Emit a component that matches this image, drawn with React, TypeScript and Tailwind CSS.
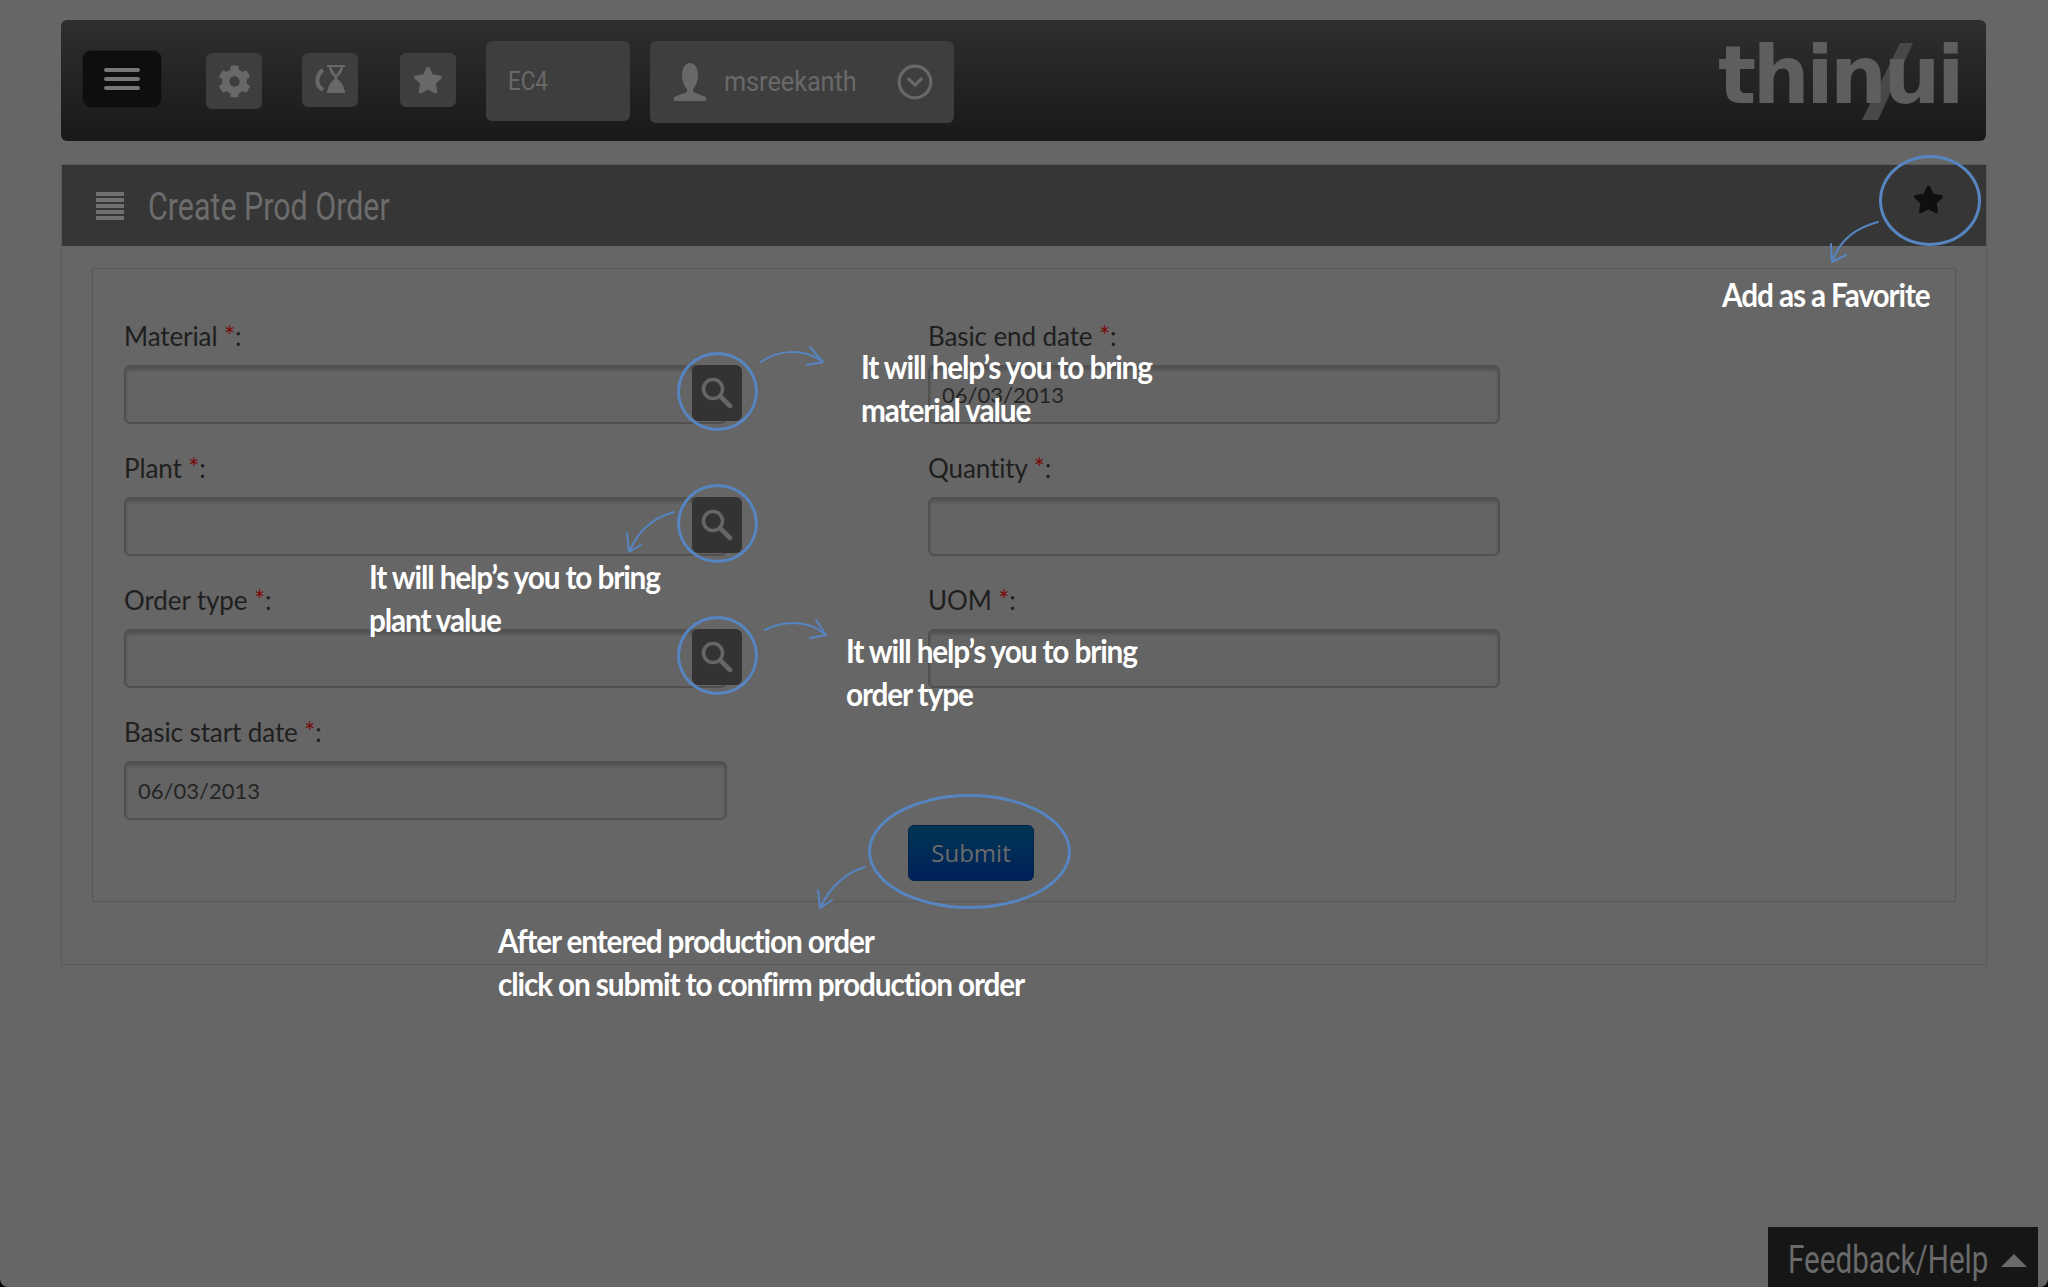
import { CircleChevronDown } from "lucide-react";
import { FaCog, FaStar } from "react-icons/fa";

const labelFont = "font-['Lato','Noto_Sans',sans-serif]";
const navFont = "font-['Roboto',sans-serif]";
const noteFont = "font-['Lato','DejaVu_Sans',sans-serif]";

const Field = ({ label, value, width }: { label: string; value?: string; width: string }) => (
	<div className={`flex flex-col ${width}`}>
		<label className={`flex items-end h-[73px] pb-[14px] text-[26px] leading-[30px] tracking-[-0.1px] text-[#1f1f1f] ${labelFont}`}>
			{label}&nbsp;<span className="text-[#7a0a0a]">*</span>:
		</label>
		<input
			readOnly
			defaultValue={value}
			className={`h-[59px] w-full rounded-md border-2 border-[#505050] bg-[#646464] px-3 text-[22px] text-[#242424] shadow-[inset_0_3px_3px_rgba(0,0,0,0.18)] outline-none ${labelFont}`}
		/>
	</div>
);

const SearchButton = ({ className }: { className: string }) => (
	<div className={`absolute left-[692px] flex h-[56px] w-[50px] items-center justify-center rounded-md bg-[#333333] ${className}`}>
		<svg width="34" height="32" viewBox="0 0 34 32" fill="none" stroke="#666666" strokeLinecap="round">
			<circle cx="13" cy="12" r="9.5" strokeWidth="3.6" />
			<path d="M21 20l9 9" strokeWidth="4.6" />
		</svg>
	</div>
);

const Ring = ({ className }: { className: string }) => (
	<div className={`absolute rounded-[50%] border-[3px] border-[#5685c1] ${className}`} />
);

const Note = ({ className, lines }: { className: string; lines: string[] }) => (
	<div className={`absolute origin-left scale-x-[0.93] whitespace-nowrap text-[32px] font-bold leading-[43px] tracking-[-1.2px] text-white ${noteFont} ${className}`}>
		{lines.map((line) => (
			<div key={line}>{line}</div>
		))}
	</div>
);

const Arrow = ({ line, head }: { line: string; head: string }) => (
	<>
		<path d={line} fill="none" stroke="#5685c1" strokeWidth={2} strokeLinecap="round" />
		<path d={head} fill="none" stroke="#5685c1" strokeWidth={2} strokeLinecap="round" strokeLinejoin="round" />
	</>
);

const App = () => {
	return (
		<div className="bg-black">
			<div className="relative h-[1287px] w-[2048px] overflow-hidden rounded-b-lg bg-[#666666] px-[61px] pt-5">
				{/* top bar */}
				<div className="relative flex h-[121px] w-[1925px] items-start rounded-md bg-gradient-to-b from-[#2f2f2f] to-[#191919] pl-[22px] pt-[21px]">
					<div className="mt-[10px] flex h-[56px] w-[78px] flex-col items-center justify-center gap-[5px] rounded-lg bg-[#0e0e0e] shadow-[0_0_0_1px_#1c1c1c]">
						<div className="h-[4px] w-[36px] rounded-full bg-[#777777]" />
						<div className="h-[4px] w-[36px] rounded-full bg-[#777777]" />
						<div className="h-[4px] w-[36px] rounded-full bg-[#777777]" />
					</div>
					<div className="ml-[45px] mt-[12px] flex h-[56px] w-[56px] items-center justify-center rounded-md bg-[#3e3e3e]">
						<FaCog size={33} className="text-[#686868]" />
					</div>
					<div className="ml-[40px] mt-[12px] flex h-[54px] w-[56px] items-center justify-center rounded-md bg-[#3e3e3e]">
						<svg width="32" height="32" viewBox="0 0 32 32" className="text-[#686868]">
							<path d="M13 1h18v2h-2c0 5-4 8-6 11 2 3 7 6 7 12h1v3H13v-3h1c0-6 5-9 7-12-2-3-6-6-6-11h-2z" fill="currentColor" />
							<path d="M17 3h10c-1 3-3 5-5 8-2-3-4-5-5-8z" fill="#3e3e3e" />
							<path d="M9 6C2 11 1 21 9 26" fill="none" stroke="currentColor" strokeWidth="4" />
						</svg>
					</div>
					<div className="ml-[42px] mt-[12px] flex h-[54px] w-[56px] items-center justify-center rounded-md bg-[#3e3e3e]">
						<FaStar size={30} className="text-[#686868]" />
					</div>
					<div className={`ml-[30px] flex h-[80px] w-[144px] items-center rounded-md bg-[#3e3e3e] pl-[22px] text-[26px] text-[#696969] ${navFont}`}>
						<span className="inline-block origin-left scale-x-[0.86]">EC4</span>
					</div>
					<div className={`ml-[20px] flex h-[82px] w-[304px] items-center rounded-md bg-[#3e3e3e] pl-[22px] text-[28px] text-[#696969] ${navFont}`}>
						<svg width="36" height="38" viewBox="0 0 36 38" className="shrink-0 text-[#686868]">
							<path d="M18 0c5 0 8 5 8 12s-3 12-5 14v3l13 5v4H2v-4l13-5v-3c-2-2-5-7-5-14S13 0 18 0z" fill="currentColor" />
						</svg>
						<span className="ml-[16px] inline-block w-[172px] origin-left scale-x-[0.9]">msreekanth</span>
						<CircleChevronDown size={38} strokeWidth={2} className="shrink-0 text-[#686868]" />
					</div>
					{/* logo */}
					<svg width="52" height="77" viewBox="0 0 52 77" className="absolute left-[1801px] top-[23px] text-[#484848]">
						<path d="M38 0h13L16 77H0z" fill="currentColor" />
					</svg>
					<div className="absolute left-[1657px] top-[1px] font-['DejaVu_Sans',sans-serif] text-[80px] font-bold leading-[110px] tracking-[-3.5px] text-[#5e5e5e]">
						thinui
					</div>
				</div>

				{/* page panel */}
				<div className="mt-[23px] h-[801px] w-[1926px] border border-[#5b5b5b]">
					<div className="flex h-[81px] items-center justify-between bg-[#363636] pl-[34px] pr-[42px]">
						<div className="flex items-center">
							<div className="flex w-[28px] flex-col gap-[2px]">
								<div className="h-[4px] bg-[#707070]" />
								<div className="h-[4px] bg-[#707070]" />
								<div className="h-[4px] bg-[#707070]" />
								<div className="h-[4px] bg-[#707070]" />
								<div className="h-[4px] bg-[#707070]" />
							</div>
							<span className={`ml-[24px] mt-[3px] inline-block origin-left scale-x-[0.8] whitespace-nowrap text-[38px] text-[#6c6c6c] ${navFont}`}>
								Create Prod Order
							</span>
						</div>
						<FaStar size={31} className="mb-[13px] text-[#0f0f0f]" />
					</div>
					<div className="ml-[30px] mt-[22px] h-[634px] w-[1864px] border border-[#585858] pl-[31px] pt-[23px]">
						<div className="flex gap-[201px]">
							<div className="flex flex-col">
								<div className="h-[132px]"><Field label="Material" width="w-[603px]" /></div>
								<div className="h-[132px]"><Field label="Plant" width="w-[603px]" /></div>
								<div className="h-[132px]"><Field label="Order type" width="w-[603px]" /></div>
								<div className="h-[132px]"><Field label="Basic start date" value="06/03/2013" width="w-[603px]" /></div>
							</div>
							<div className="flex flex-col">
								<div className="h-[132px]"><Field label="Basic end date" value="06/03/2013" width="w-[572px]" /></div>
								<div className="h-[132px]"><Field label="Quantity" width="w-[572px]" /></div>
								<div className="h-[132px]"><Field label="UOM" width="w-[572px]" /></div>
								<button className="-ml-[20px] mt-[137px] h-[56px] w-[126px] rounded-md border border-[#00234a] bg-gradient-to-b from-[#003553] to-[#00205a] font-['Open_Sans',sans-serif] text-[24px] text-[#6b6b6b]">
									Submit
								</button>
							</div>
						</div>
					</div>
				</div>

				{/* walkthrough overlay */}
				<SearchButton className="top-[365px]" />
				<SearchButton className="top-[497px]" />
				<SearchButton className="top-[629px]" />
				<Ring className="left-[677px] top-[352px] h-[79px] w-[81px]" />
				<Ring className="left-[677px] top-[484px] h-[79px] w-[81px]" />
				<Ring className="left-[677px] top-[616px] h-[79px] w-[81px]" />
				<Ring className="left-[868px] top-[794px] h-[115px] w-[203px]" />
				<Ring className="left-[1879px] top-[155px] h-[91px] w-[102px]" />
				<svg width="2048" height="1287" className="pointer-events-none absolute left-0 top-0">
					<Arrow line="M1878 222C1855 228 1840 240 1833 260" head="M1831 244L1832 262L1846 255" />
					<Arrow line="M761 362C775 352 800 346 822 361" head="M810 347L823 362L807 365" />
					<Arrow line="M765 630C780 622 805 618 825 634" head="M816 620L826 635L810 638" />
					<Arrow line="M674 512C652 518 638 532 630 550" head="M627 533L629 552L641 545" />
					<Arrow line="M865 867C845 873 830 888 821 906" head="M818 890L820 908L832 900" />
				</svg>
				<Note className="left-[1722px] top-[273px]" lines={["Add as a Favorite"]} />
				<Note className="left-[861px] top-[345px]" lines={["It will help’s you to bring", "material value"]} />
				<Note className="left-[369px] top-[555px]" lines={["It will help’s you to bring", "plant value"]} />
				<Note className="left-[846px] top-[629px]" lines={["It will help’s you to bring", "order type"]} />
				<Note className="left-[498px] top-[919px]" lines={["After entered production order", "click on submit to confirm production order"]} />

				{/* feedback tab */}
				<div className={`absolute bottom-0 right-[10px] flex h-[60px] w-[270px] items-center bg-[#161616] pl-[20px] pt-[6px] text-[38px] text-[#6a6a6a] ${navFont}`}>
					<span className="inline-block w-[213px] origin-left scale-x-[0.78] whitespace-nowrap">Feedback/Help</span>
					<span className="h-0 w-0 border-x-[13px] border-b-[13px] border-x-transparent border-b-[#6a6a6a]" />
				</div>
			</div>
		</div>
	);
};

export default App;
